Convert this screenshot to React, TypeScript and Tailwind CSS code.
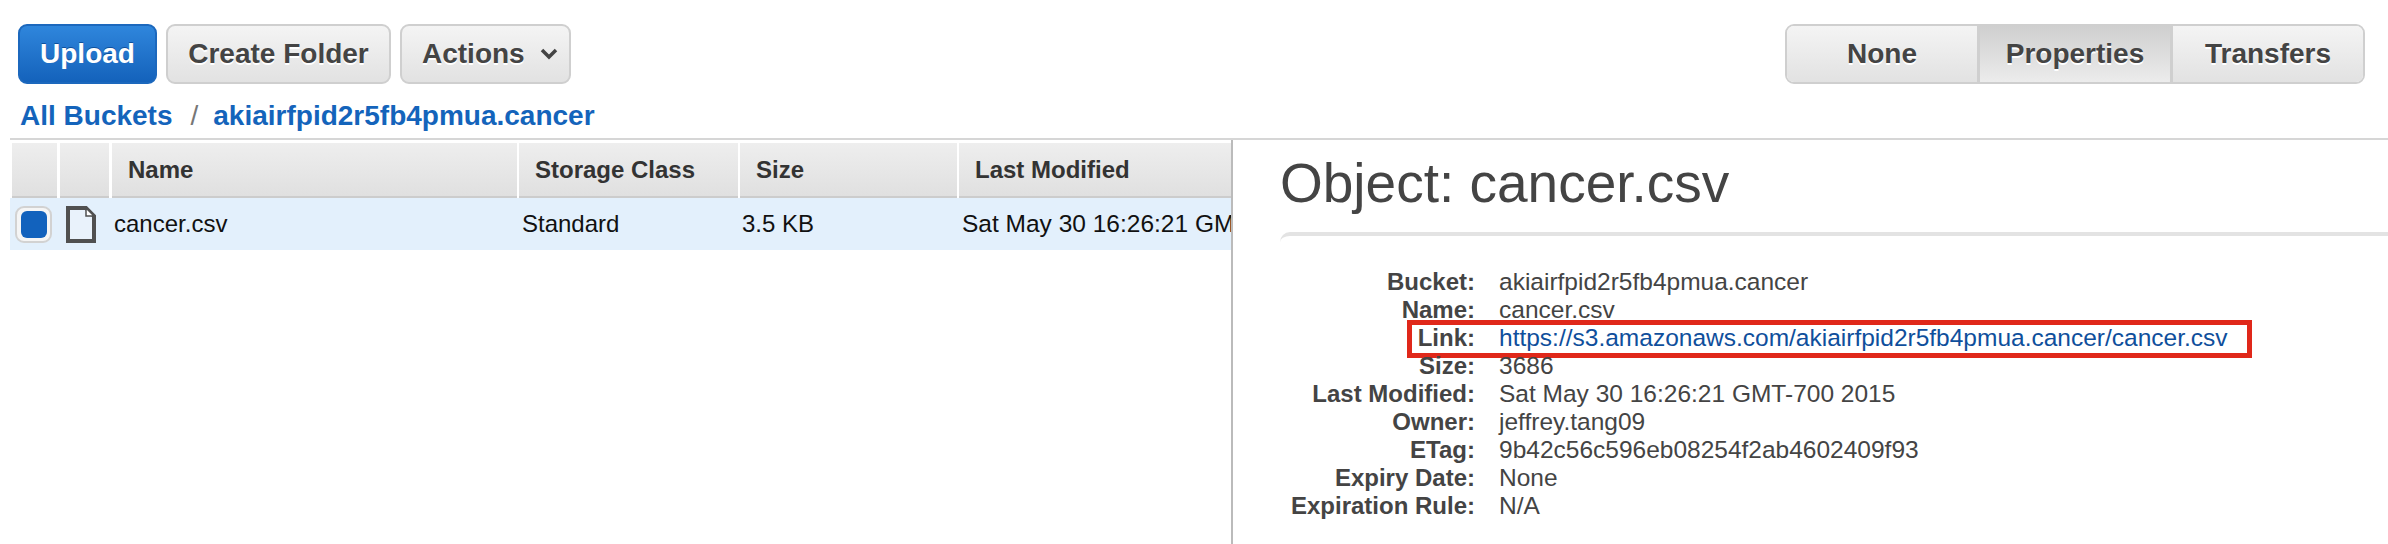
const FONT = "font-['Helvetica','Liberation_Sans',Arial,sans-serif]"

const details: [string, string][] = [
  ["Bucket:", "akiairfpid2r5fb4pmua.cancer"],
  ["Name:", "cancer.csv"],
  ["Link:", "https://s3.amazonaws.com/akiairfpid2r5fb4pmua.cancer/cancer.csv"],
  ["Size:", "3686"],
  ["Last Modified:", "Sat May 30 16:26:21 GMT-700 2015"],
  ["Owner:", "jeffrey.tang09"],
  ["ETag:", "9b42c56c596eb08254f2ab4602409f93"],
  ["Expiry Date:", "None"],
  ["Expiration Rule:", "N/A"],
]

const columns = [
  { label: "", width: "w-[45px] mr-[3px]" },
  { label: "", width: "w-[49px] mr-[3px]" },
  { label: "Name", width: "w-[405px] mr-[2px]" },
  { label: "Storage Class", width: "w-[219px] mr-[2px]" },
  { label: "Size", width: "w-[217px] mr-[2px]" },
  { label: "Last Modified", width: "w-[272px]" },
]

const GrayButton = ({ label, className }: { label: string; className: string }) => (
  <button className={`flex h-[60px] items-center justify-center rounded-[9px] border-2 border-[#cfcfcf] bg-gradient-to-b from-[#f4f4f4] to-[#e2e2e2] text-[28px] font-bold text-[#444] [text-shadow:0_2px_0_#fff] ${className}`}>
    {label}
  </button>
)

const FileIcon = () => (
  <svg width="30" height="37" viewBox="0 0 30 37" className="shrink-0">
    <path d="M2 2H20L28 10V35H2Z" fill="#e9f2fb" stroke="#505050" strokeWidth="4" />
    <path d="M20 2V10H28Z" fill="#fff" stroke="#505050" strokeWidth="1.5" />
  </svg>
)

const App = () => {
  return (
    <div className={`h-[544px] w-[2388px] overflow-hidden bg-white ${FONT}`}>
      <div className="flex items-start justify-between pl-[18px] pr-[23px] pt-[24px]">
        <div className="flex gap-[9px]">
          <button className="flex h-[60px] w-[139px] items-center justify-center rounded-[9px] border-2 border-[#1c68bd] bg-gradient-to-b from-[#2f86dc] to-[#1462bb] text-[28px] font-bold text-white [text-shadow:0_-1px_0_#0d4f9c]">
            Upload
          </button>
          <GrayButton label="Create Folder" className="w-[225px]" />
          <button className="flex h-[60px] w-[171px] items-center gap-[15px] rounded-[9px] border-2 border-[#cfcfcf] bg-gradient-to-b from-[#f4f4f4] to-[#e2e2e2] pl-[20px] text-[28px] font-bold text-[#444] [text-shadow:0_2px_0_#fff]">
            Actions
            <svg width="18" height="12" viewBox="0 0 18 12">
              <path d="M2 2L9 9L16 2" fill="none" stroke="#444" strokeWidth="3.5" />
            </svg>
          </button>
        </div>
        <div className="flex h-[60px] w-[580px] overflow-hidden rounded-[9px] border-2 border-[#cfcfcf] text-[28px] font-bold text-[#444] [text-shadow:0_2px_0_#fff]">
          <div className="flex flex-1 items-center justify-center bg-gradient-to-b from-[#f4f4f4] to-[#e2e2e2]">None</div>
          <div className="flex w-[196px] items-center justify-center border-x-[3px] border-[#cfcfcf] bg-gradient-to-b from-[#cfcfcf] to-[#ececec]">Properties</div>
          <div className="flex flex-1 items-center justify-center bg-gradient-to-b from-[#f4f4f4] to-[#e2e2e2]">Transfers</div>
        </div>
      </div>

      <div className="flex h-[54px] items-center pl-[20px] pt-[10px] text-[28px] font-bold text-[#1464bb]">
        <span>All Buckets</span>
        <span className="ml-[18px] mr-[15px] font-normal text-[#777]">/</span>
        <span>akiairfpid2r5fb4pmua.cancer</span>
      </div>

      <div className="ml-[10px] h-[2px] bg-[#d6d6d6]" />

      <div className="flex">
        <div className="ml-[10px] h-[404px] w-[1221px] shrink-0 overflow-hidden">
          <div className="mt-[3px] flex h-[55px] pl-[2px]">
            {columns.map((col, i) => (
              <div
                key={i}
                className={`flex shrink-0 items-center border-b-2 border-[#cccccc] bg-gradient-to-b from-[#eeeeee] to-[#e0e0e0] pl-[16px] text-[24px] font-bold text-[#333] ${col.width}`}
              >
                {col.label}
              </div>
            ))}
          </div>
          <div className="flex h-[52px] items-center whitespace-nowrap bg-[#e3f0fc] text-[24px] text-[#111]">
            <div className="ml-[5px] flex h-[37px] w-[37px] shrink-0 items-center justify-center rounded-[9px] border-2 border-[#d2d2d2] bg-[#f5f5f5]">
              <div className="h-[27px] w-[26px] rounded-[6px] bg-[#1262bd]" />
            </div>
            <div className="ml-[14px]">
              <FileIcon />
            </div>
            <span className="ml-[18px] w-[408px] shrink-0">cancer.csv</span>
            <span className="w-[220px] shrink-0">Standard</span>
            <span className="w-[220px] shrink-0">3.5 KB</span>
            <span className="shrink-0 text-[24.5px]">Sat May 30 16:26:21 GMT-700 2015</span>
          </div>
        </div>

        <div className="min-w-0 flex-1 border-l-2 border-[#bbbbbb]">
          <h1 className="ml-[47px] mt-[11px] text-[55px] font-normal leading-[64px] text-[#444]">Object: cancer.csv</h1>
          <div className="ml-[47px] mt-[17px] h-[10px] rounded-tl-[14px] border-t-4 border-[#e3e3e3]" />
          <div className="mt-[26px]">
            {details.map(([label, value]) => (
              <div key={label} className="relative flex h-[28px] items-center leading-[28px] text-[#444]">
                <span className="w-[242px] shrink-0 text-right text-[24px] font-bold">{label}</span>
                <span className={`ml-[24px] text-[24.5px] ${label === "Link:" ? "text-[#0f4f9c]" : ""}`}>{value}</span>
                {label === "Link:" && (
                  <div className="absolute left-[174px] top-[-4px] h-[38px] w-[845px] border-[5px] border-[#e0281a]" />
                )}
              </div>
            ))}
          </div>
        </div>
      </div>
    </div>
  )
}

export default App
